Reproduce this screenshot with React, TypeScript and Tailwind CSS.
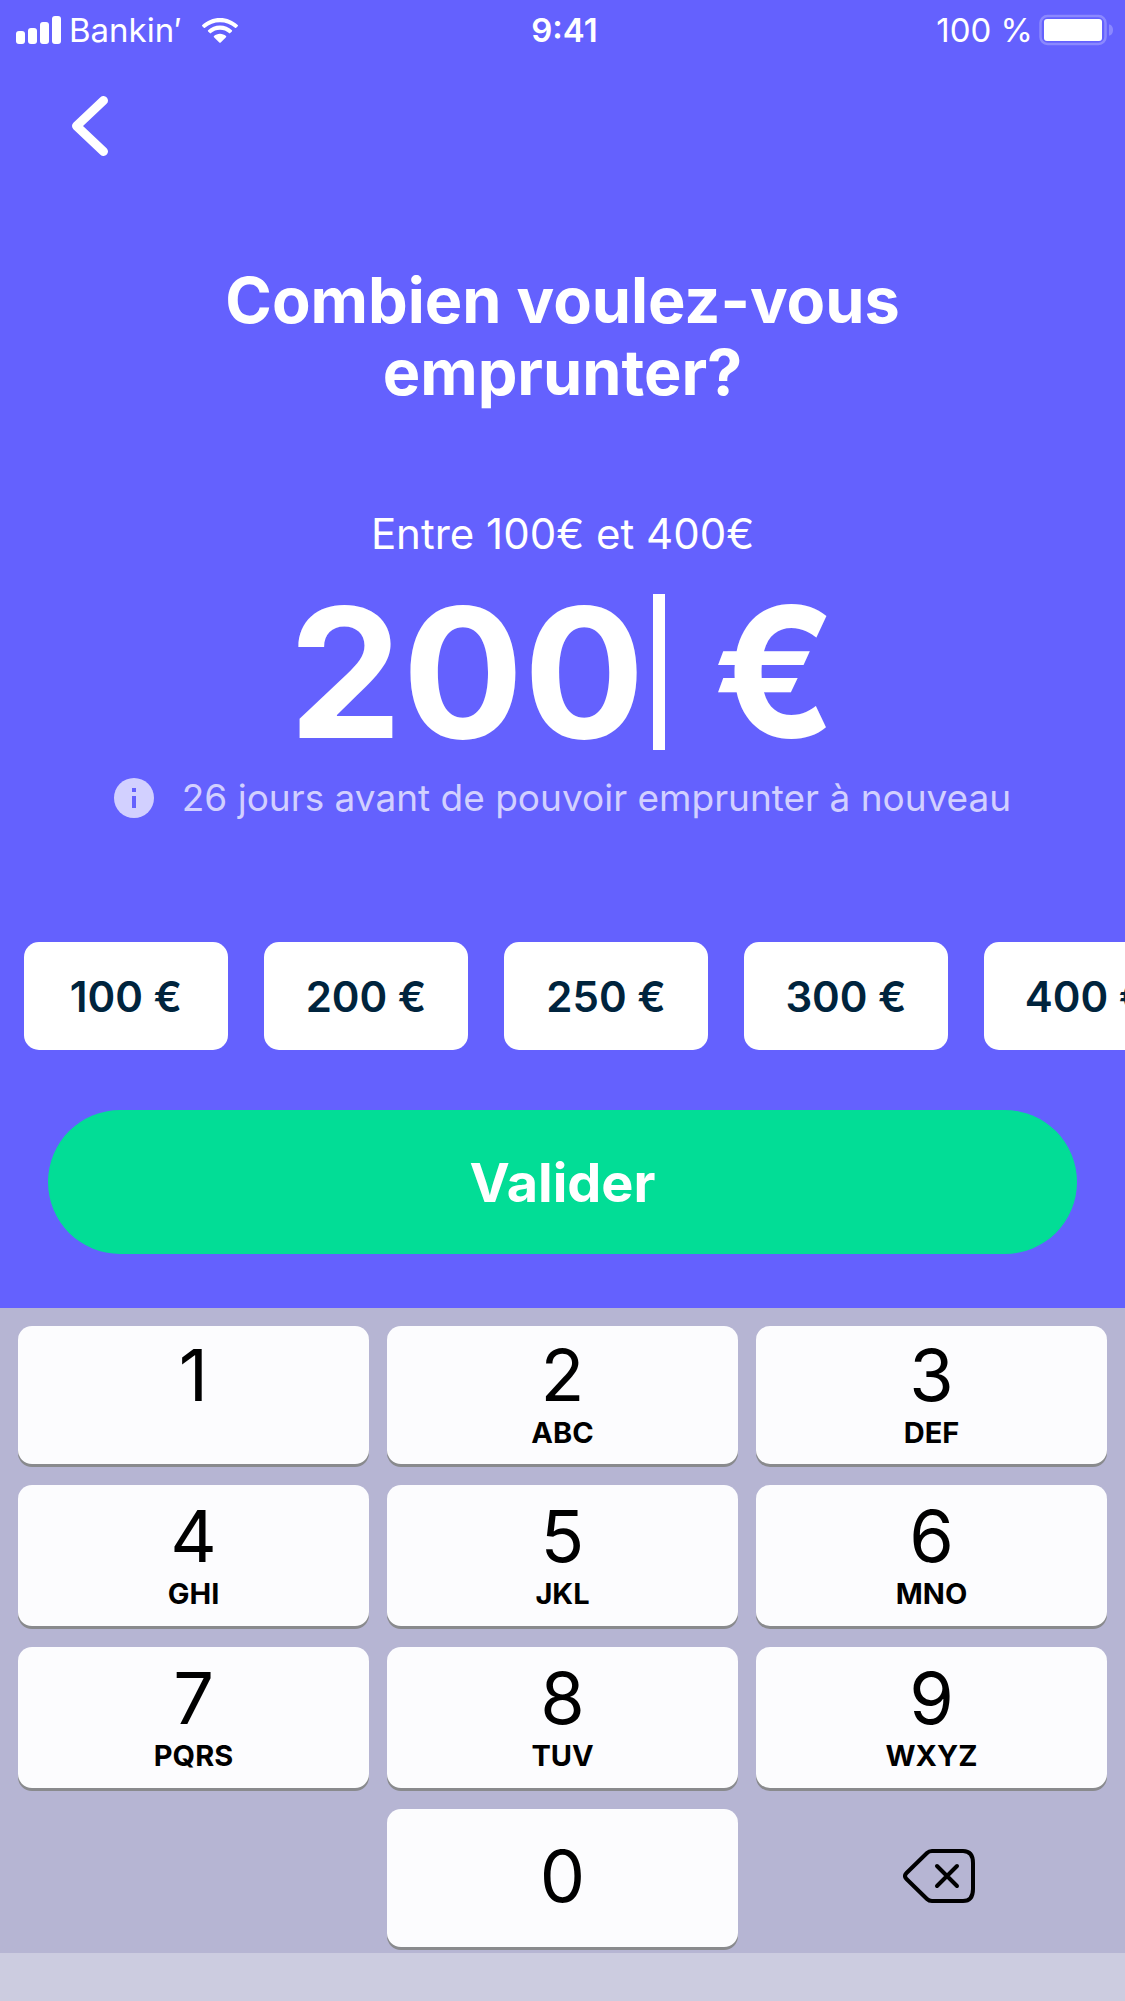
import { useState } from "react";

const presets = ["100", "200", "250", "300", "400"];

const rows = [
  [
    { digit: "1", letters: "" },
    { digit: "2", letters: "ABC" },
    { digit: "3", letters: "DEF" },
  ],
  [
    { digit: "4", letters: "GHI" },
    { digit: "5", letters: "JKL" },
    { digit: "6", letters: "MNO" },
  ],
  [
    { digit: "7", letters: "PQRS" },
    { digit: "8", letters: "TUV" },
    { digit: "9", letters: "WXYZ" },
  ],
];

const keyClass =
  "flex flex-col items-center justify-center gap-1 rounded-[14px] bg-[#fcfcfe] text-black shadow-[0_3px_0_#898a8d] active:bg-gray-200";

function StatusBar() {
  return (
    <div className="grid h-[60px] grid-cols-3 items-center pr-3 pl-4 text-[33px] leading-[60px]">
      <div className="flex items-center">
        <svg width="45" height="28" viewBox="0 0 45 28" fill="currentColor" aria-hidden="true">
          <rect x="0" y="15" width="9" height="13" rx="3" />
          <rect x="12" y="12" width="9" height="16" rx="3" />
          <rect x="24" y="6" width="9" height="22" rx="3" />
          <rect x="36" y="0" width="9" height="28" rx="3" />
        </svg>
        <span className="ml-2">Bankin′</span>
        <svg className="ml-5" width="36" height="25" viewBox="0 0 36 25" fill="currentColor" aria-hidden="true">
          <path d="M18 0C24.900 0 31.200 2.700 35.700 7.100C36.100 7.500 36.100 7.900 35.700 8.300L34.200 9.800C33.800 10.200 33.400 10.200 33 9.800C29 6.200 23.700 4.200 18 4.200C12.300 4.200 7 6.200 3 9.800C2.600 10.200 2.200 10.200 1.800 9.800L0.300 8.300C-0.100 7.900 -0.100 7.500 0.300 7.100C4.800 2.700 11.100 0 18 0Z" />
          <path d="M18 7.600C22.600 7.600 26.800 9.400 29.900 12.300C30.300 12.700 30.300 13.100 29.900 13.500L28.200 15.100C27.800 15.500 27.400 15.500 27 15.100C24.600 13 21.500 11.800 18 11.800C14.500 11.800 11.400 13 9 15.100C8.600 15.500 8.200 15.500 7.800 15.100L6.100 13.500C5.700 13.100 5.700 12.700 6.100 12.300C9.200 9.400 13.400 7.600 18 7.600Z" />
          <path d="M18 15.800C20.300 15.800 22.400 16.700 24 18.100C24.400 18.500 24.400 18.900 24 19.300L18.700 24.500C18.300 24.900 17.700 24.900 17.300 24.500L12 19.300C11.600 18.900 11.600 18.500 12 18.100C13.600 16.700 15.700 15.800 18 15.800Z" />
        </svg>
      </div>
      <div className="text-center font-semibold">9:41</div>
      <div className="flex items-center justify-end gap-1.5">
        <span>100 %</span>
        <svg width="74" height="32" viewBox="0 0 74 32" aria-hidden="true">
          <rect x="1.500" y="2" width="65" height="28" rx="7" fill="none" stroke="white" strokeOpacity="0.25" strokeWidth="2.500" />
          <rect x="5" y="5" width="58" height="22" rx="3" fill="white" />
          <path d="M70 10.500C72.500 10.500 74 13 74 16C74 19 72.500 21.500 70 21.500Z" fill="white" fillOpacity="0.25" />
        </svg>
      </div>
    </div>
  );
}

function InfoIcon() {
  return (
    <svg width="40" height="40" viewBox="0 0 40 40" aria-hidden="true">
      <circle cx="20" cy="20" r="20" fill="#d2d0ff" />
      <path d="M18 10h4v4h-4zM18 18h4v12h-4z" fill="#6461fe" />
    </svg>
  );
}

function Backspace() {
  return (
    <svg width="74" height="54" viewBox="0 0 74 54" fill="none" stroke="black" strokeWidth="4" strokeLinejoin="round" strokeLinecap="round" aria-hidden="true">
      <path d="M29 2H60Q70 2 70 14V40Q70 52 60 52H29Q26 52 24 50L3.500 30Q0.500 27 3.500 24L24 4Q26 2 29 2Z" />
      <path d="M34 17L54 37M54 17L34 37" />
    </svg>
  );
}

export default function App() {
  const [amount, setAmount] = useState("200");
  const press = (digit: string) => setAmount((value) => (value + digit).slice(0, 3));

  return (
    <div className="flex min-h-screen flex-col overflow-hidden bg-[#6461fe] font-['Inter',sans-serif] text-white">
      <StatusBar />

      <header className="px-[72px] pt-9">
        <button type="button" aria-label="Retour" className="block">
          <svg width="36" height="60" viewBox="0 0 36 60" fill="none" stroke="currentColor" strokeWidth="9" strokeLinecap="round" strokeLinejoin="round" aria-hidden="true">
            <path d="M31.500 4.500L4.500 30L31.500 55.500" />
          </svg>
        </button>
      </header>

      <main className="flex flex-col">
        <h1 className="mx-auto mt-[108px] max-w-[740px] text-center text-[63px] leading-[72px] font-bold">
          Combien voulez-vous emprunter?
        </h1>

        <label htmlFor="amount" className="mt-[96px] text-center text-[42px] leading-[60px]">
          Entre 100€ et 400€
        </label>

        <div className="mt-[18px] flex h-[180px] items-center justify-center text-[180px] font-bold">
          <input
            id="amount"
            inputMode="numeric"
            value={amount}
            onChange={(event) => setAmount(event.target.value)}
            className="field-sizing-content bg-transparent leading-none caret-transparent outline-none"
          />
          <span className="ml-2 h-[156px] w-3 bg-white" />
          <span className="ml-12 leading-none">€</span>
        </div>

        <p className="mt-[6px] flex items-center justify-center gap-7 text-[37px] leading-[60px] text-[#d2d0ff]">
          <InfoIcon />
          26 jours avant de pouvoir emprunter à nouveau
        </p>

        <div className="mt-[114px] flex gap-9 overflow-x-auto pl-6 [scrollbar-width:none]">
          {presets.map((preset) => (
            <button
              key={preset}
              type="button"
              onClick={() => setAmount(preset)}
              className="h-[108px] w-[204px] shrink-0 rounded-[15px] bg-white text-[42px] font-semibold text-[#00243d]"
            >
              {preset} €
            </button>
          ))}
        </div>

        <button
          type="button"
          className="mx-12 mt-[60px] mb-[54px] h-36 rounded-full bg-[#02dd96] text-[54px] font-bold"
        >
          Valider
        </button>
      </main>

      <section aria-label="Clavier" className="flex flex-col gap-[21px] bg-[#b6b5d3] px-[18px] pt-[18px] pb-[6px]">
        {rows.map((keys, index) => (
          <div key={keys[0].digit} className={index === 0 ? "grid h-[138px] grid-cols-3 gap-[18px]" : "grid h-[141px] grid-cols-3 gap-[18px]"}>
            {keys.map(({ digit, letters }) => (
              <button key={digit} type="button" onClick={() => press(digit)} className={keyClass}>
                <span className="text-[72px] leading-[72px]">{digit}</span>
                <span className="h-9 text-[29px] leading-9 font-bold">{letters}</span>
              </button>
            ))}
          </div>
        ))}
        <div className="grid h-[138px] grid-cols-3 gap-[18px]">
          <span />
          <button type="button" onClick={() => press("0")} className={`${keyClass} pb-1`}>
            <span className="text-[72px] leading-[72px]">0</span>
          </button>
          <button
            type="button"
            aria-label="Effacer"
            onClick={() => setAmount((value) => value.slice(0, -1))}
            className="flex items-center justify-center pb-1 pl-4"
          >
            <Backspace />
          </button>
        </div>
      </section>
      <div className="min-h-12 flex-1 bg-[#cccce0]" />
    </div>
  );
}
